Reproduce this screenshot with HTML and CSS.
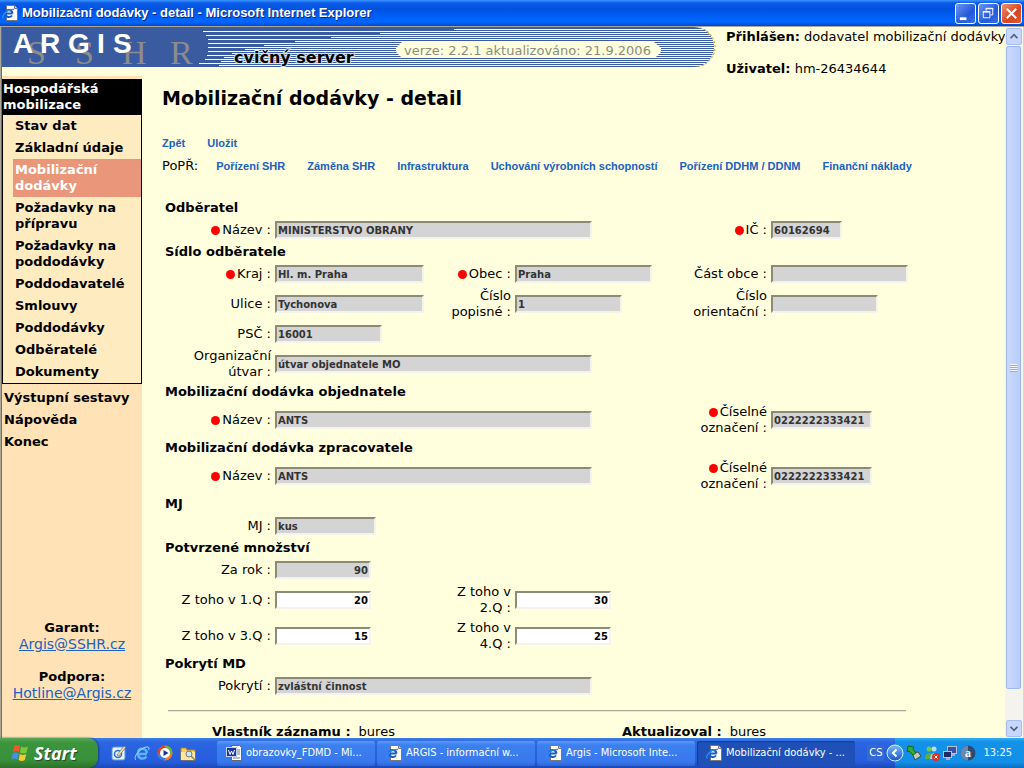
FILE: index.html
```html
<!DOCTYPE html>
<html lang="cs">
<head>
<meta charset="utf-8">
<title>Mobilizační dodávky - detail</title>
<link rel="stylesheet" href="styles.css">
</head>
<body>
<svg class="defs" aria-hidden="true">
  <defs>
    <linearGradient id="ball" x1="0" y1="0" x2="0" y2="1"><stop offset="0" stop-color="#7db8ff"/><stop offset="1" stop-color="#1557c8"/></linearGradient>
    <symbol id="ie-page" viewBox="0 0 16 16">
      <path d="M4.500.5h8l3 3v12h-11z" fill="#fffdf2" stroke="#777"/>
      <path d="M12.500.5v3h3" fill="#d8d4c0" stroke="#777"/>
      <path d="M10.500 8.500H3.500c0 4 4.500 4.500 6.500 2M3.500 8c.5-4 6.500-4 7 .5" fill="none" stroke="#1c5cc8" stroke-width="2"/>
      <path d="M1.500 13.500C-1.500 11.500 5 4 12 4.500" fill="none" stroke="#2f8cf0" stroke-width="1.300"/>
    </symbol>
    <symbol id="ie" viewBox="0 0 16 16">
      <path d="M13 9H4c0 5 6 6 8.500 2.500M4 7.500C4.500 2.500 12 2.500 13 8" fill="none" stroke="#5cb4ff" stroke-width="2.500"/>
      <path d="M2 15C-2 12 8 1 14 2c1.500.5 1 2 .5 3" fill="none" stroke="#a8dcff"/>
    </symbol>
  </defs>
</svg>

<header class="titlebar">
  <svg class="icon16" aria-hidden="true"><use href="#ie-page"/></svg>
  <span class="titlebar-text">Mobilizační dodávky - detail - Microsoft Internet Explorer</span>
  <button class="winbtn" aria-label="Minimalizovat"><svg viewBox="0 0 20 20"><path d="M4 14h7v3H4z" fill="#fff"/></svg></button>
  <button class="winbtn" aria-label="Obnovit"><svg viewBox="0 0 20 20"><path d="M7.500 7V4.500h7v7H12M7 5h8M4.500 8.500h7v6h-7zM4 8h8" fill="none" stroke="#fff"/></svg></button>
  <button class="winbtn close" aria-label="Zavřít"><svg viewBox="0 0 20 20"><path d="M5 5l10 10M15 5L5 15" stroke="#fff" stroke-width="2.200"/></svg></button>
</header>

<div class="viewport">
  <div class="page">
    <div class="top">
      <svg class="banner" viewBox="0 0 712 40" aria-label="ARGIS SSHR">
        <defs>
          <clipPath id="bullet"><path d="M0 0h692a20 20 0 0 1 0 40H0z"/></clipPath>
        </defs>
        <path d="M0 0h692a20 20 0 0 1 0 40H0z" fill="#3a5ba0"/>
        <path clip-path="url(#bullet)" fill="none" stroke="#ffffde" d="M201 4.500h520M204 8.500h520M206 12.500h520M206 16.500h520M206 20.500h520M206 24.500h520M205 28.500h520M203 32.500h520M197 36.500h520M452 2.500h260M378 6.500h340M329 10.500h390M293 14.500h420M262 18.500h450M243 22.500h470M230 26.500h490M222 30.500h490M219 34.500h490M217 38.500h490"/>
        <path d="M694 .5a19 19.500 0 0 1 0 39" fill="none" stroke="#b89a28" stroke-dasharray="2 2"/>
        <path d="M400 15h252l7 6v4l-6 6H400l-6-6v-4z" fill="#ffffde"/>
        <g class="sshr"><text x="25" y="37">S</text><text x="73" y="37">S</text><text x="120" y="37">H</text><text x="168" y="37">R</text></g>
        <g class="argis"><text x="11" y="26">A</text><text x="38" y="26">R</text><text x="66" y="26">G</text><text x="95" y="26">I</text><text x="111" y="26">S</text></g>
        <text class="server" x="232" y="36">cvičný server</text>
        <text class="version" x="402" y="28">verze: 2.2.1 aktualizováno: 21.9.2006</text>
      </svg>
      <div class="login">
        <p><b>Přihlášen:</b> dodavatel mobilizační dodávky</p>
        <p><b>Uživatel:</b> hm-26434644</p>
      </div>
    </div>

    <div class="columns">
      <aside class="sidebar">
        <nav>
          <div class="menu">
            <a class="menu-head" href="#">Hospodářská mobilizace</a>
            <a href="#">Stav dat</a>
            <a href="#">Základní údaje</a>
            <a class="active" href="#">Mobilizační dodávky</a>
            <a href="#">Požadavky na přípravu</a>
            <a href="#">Požadavky na poddodávky</a>
            <a href="#">Poddodavatelé</a>
            <a href="#">Smlouvy</a>
            <a href="#">Poddodávky</a>
            <a href="#">Odběratelé</a>
            <a href="#">Dokumenty</a>
          </div>
          <div class="menu-rest">
            <a href="#">Výstupní sestavy</a>
            <a href="#">Nápověda</a>
            <a href="#">Konec</a>
          </div>
        </nav>
        <div class="contacts">
          <p>Garant:<br><a href="#">Argis@SSHR.cz</a></p>
          <p>Podpora:<br><a href="#">Hotline@Argis.cz</a></p>
        </div>
      </aside>

      <main>
        <h1>Mobilizační dodávky - detail</h1>
        <div class="actions"><a href="#">Zpět</a><a href="#">Uložit</a></div>
        <div class="actions second">
          <span>PoPŘ:</span><a href="#">Pořízení SHR</a><a href="#">Záměna SHR</a><a href="#">Infrastruktura</a><a href="#">Uchování výrobních schopností</a><a href="#">Pořízení DDHM / DDNM</a><a href="#">Finanční náklady</a>
        </div>

        <form>
          <h2>Odběratel</h2>
          <div class="row">
            <label for="f1"><i class="req"></i>Název :</label><input id="f1" class="wide" readonly value="MINISTERSTVO OBRANY">
            <label class="third" for="f2"><i class="req"></i>IČ :</label><input id="f2" class="w71" readonly value="60162694">
          </div>
          <h2>Sídlo odběratele</h2>
          <div class="row">
            <label for="f3"><i class="req"></i>Kraj :</label><input id="f3" class="w149" readonly value="Hl. m. Praha">
            <label for="f4"><i class="req"></i>Obec :</label><input id="f4" class="w137" readonly value="Praha">
            <label for="f5">Část obce :</label><input id="f5" class="w137" readonly>
          </div>
          <div class="row">
            <label for="f6">Ulice :</label><input id="f6" class="w149" readonly value="Tychonova">
            <label for="f7">Číslo<br>popisné :</label><input id="f7" class="w107" readonly value="1">
            <label for="f8">Číslo<br>orientační :</label><input id="f8" class="w107" readonly>
          </div>
          <div class="row">
            <label for="f9">PSČ :</label><input id="f9" class="w107" readonly value="16001">
          </div>
          <div class="row">
            <label for="f10">Organizační<br>útvar :</label><input id="f10" class="wide" readonly value="útvar objednatele MO">
          </div>
          <h2>Mobilizační dodávka objednatele</h2>
          <div class="row">
            <label for="f11"><i class="req"></i>Název :</label><input id="f11" class="wide" readonly value="ANTS">
            <label class="third" for="f12"><i class="req"></i>Číselné<br>označení :</label><input id="f12" class="w101" readonly value="0222222333421">
          </div>
          <h2>Mobilizační dodávka zpracovatele</h2>
          <div class="row">
            <label for="f13"><i class="req"></i>Název :</label><input id="f13" class="wide" readonly value="ANTS">
            <label class="third" for="f14"><i class="req"></i>Číselné<br>označení :</label><input id="f14" class="w101" readonly value="0222222333421">
          </div>
          <h2>MJ</h2>
          <div class="row">
            <label for="f15">MJ :</label><input id="f15" class="w101" readonly value="kus">
          </div>
          <h2>Potvrzené množství</h2>
          <div class="row">
            <label for="f16">Za rok :</label><input id="f16" class="num" readonly value="90">
          </div>
          <div class="row">
            <label for="f17">Z toho v 1.Q :</label><input id="f17" class="num" value="20">
            <label for="f18">Z toho v<br>2.Q :</label><input id="f18" class="num" value="30">
          </div>
          <div class="row">
            <label for="f19">Z toho v 3.Q :</label><input id="f19" class="num" value="15">
            <label for="f20">Z toho v<br>4.Q :</label><input id="f20" class="num" value="25">
          </div>
          <h2>Pokrytí MD</h2>
          <div class="row">
            <label for="f21">Pokrytí :</label><input id="f21" class="wide" readonly value="zvláštní činnost">
          </div>
        </form>
        <hr>
        <div class="record">
          <p><b>Vlastník záznamu :</b><span>bures</span></p>
          <p><b>Aktualizoval :</b><span>bures</span></p>
        </div>
      </main>
    </div>
  </div>

  <div class="scrollbar" aria-hidden="true">
    <svg class="arrow" viewBox="0 0 16 16"><path d="M4 10l4-4 4 4" fill="none" stroke="#4d6185" stroke-width="2"/></svg>
    <div class="thumb"><span class="grip"></span></div>
    <svg class="arrow" viewBox="0 0 16 16"><path d="M4 6l4 4 4-4" fill="none" stroke="#4d6185" stroke-width="2"/></svg>
  </div>
</div>

<footer class="taskbar">
  <button class="start">
    <svg viewBox="0 0 20 18" aria-hidden="true"><path d="M4 2q3-2 6 0L9 8q-3-2-6 0z" fill="#f05a28"/><path d="M11 2.500q3 2 7 0l-1.500 6q-3 2-6.500 0z" fill="#7cc83a"/><path d="M2.700 9.500q3-2 6 0l-1.200 6q-3-2-6 0z" fill="#4a8cf0"/><path d="M9.800 10q3 2 6.500 0l-1.500 6q-3 2-6.200 0z" fill="#fac832"/></svg>
    Start
  </button>
  <div class="quick">
    <svg class="icon16" viewBox="0 0 16 16" aria-label="Plocha"><rect x="1" y="2" width="13" height="13" rx="2" fill="#e8f2fc" stroke="#5a94d0"/><circle cx="7" cy="9" r="3.500" fill="none" stroke="#2874d0" stroke-width="1.500"/><path d="M6 10l7-9 2 1-7 9z" fill="#f4e0b0" stroke="#555" stroke-width=".6"/></svg>
    <svg class="icon16" aria-label="Internet Explorer"><use href="#ie"/></svg>
    <svg class="icon16" viewBox="0 0 16 16" aria-label="Media Player"><circle cx="8" cy="8" r="7.500" fill="#f08020"/><path d="M8 .5A7.500 7.500 0 0 0 .5 8H8z" fill="#e83c20"/><path d="M8 .5A7.500 7.500 0 0 1 15.500 8H8z" fill="#60b840"/><path d="M.5 8A7.500 7.500 0 0 0 8 15.500V8z" fill="#3c7ce0"/><circle cx="8" cy="8" r="5" fill="#fff"/><path d="M6.500 5l5 3-5 3z" fill="#123a90"/></svg>
    <svg class="icon16" viewBox="0 0 16 16" aria-label="Průzkumník"><path d="M1 3h5l1 2h8v10H1z" fill="#f8d060" stroke="#b88018"/><path d="M1 7h14v8H1z" fill="#ffe89c"/><circle cx="9" cy="9" r="3" fill="#c8e8ff" stroke="#777"/><path d="M11 11l4 4" stroke="#885" stroke-width="1.500"/></svg>
  </div>
  <div class="tasks">
    <button><svg class="icon16" viewBox="0 0 16 16" aria-hidden="true"><path d="M5.500.5h8l2 2v13h-10z" fill="#fff" stroke="#666"/><path d="M11 5h3M11 7h3M11 9h3M7 13h7" stroke="#778"/><rect x=".5" y="2.500" width="10" height="9" fill="#1c34a0" stroke="#c8d0f0"/><path d="M2.500 5l1.500 4.500L5.500 6 7 9.500 8.500 5" fill="none" stroke="#fff"/></svg><span>obrazovky_FDMD - Mi...</span></button>
    <button><svg class="icon16" aria-hidden="true"><use href="#ie-page"/></svg><span>ARGIS - informační w...</span></button>
    <button><svg class="icon16" aria-hidden="true"><use href="#ie-page"/></svg><span>Argis - Microsoft Inte...</span></button>
    <button class="current"><svg class="icon16" aria-hidden="true"><use href="#ie-page"/></svg><span>Mobilizační dodávky - ...</span></button>
  </div>
  <span class="lang">CS</span>
  <div class="tray">
    <button class="expand" aria-label="Zobrazit skryté ikony"><svg viewBox="0 0 18 18"><circle cx="9" cy="9" r="8" fill="url(#ball)" stroke="#d8ecff"/><path d="M10.500 5.500L7 9l3.500 3.500" fill="none" stroke="#fff" stroke-width="2"/></svg></button>
    <svg class="icon16" viewBox="0 0 16 16" aria-hidden="true"><path d="M6 8l6-1 3 4-6 4z" fill="#c8c8b8" stroke="#444"/><path d="M2 1l6 1-1 2 3 4-3 2-4-4-2 1z" fill="#38a838" stroke="#186818"/></svg>
    <svg class="icon16" viewBox="0 0 16 16" aria-hidden="true"><circle cx="5" cy="4" r="2.500" fill="#70c850"/><path d="M1 14c0-8 8-8 8 0z" fill="#58b040"/><circle cx="10" cy="4" r="2.500" fill="#b8dcf4"/><path d="M6 14c0-8 8-8 8 0z" fill="#a8ccf0"/><circle cx="12" cy="12" r="4" fill="#e03020"/><path d="M10.500 10.500l3 3m0-3l-3 3" stroke="#fff"/></svg>
    <svg class="icon16" viewBox="0 0 16 16" aria-hidden="true"><rect x="5.500" y="1.500" width="9" height="7" fill="#3a50a0" stroke="#b8c0d8"/><path d="M9 9h4v2H9z" fill="#a8b0c8"/><rect x="1.500" y="6.500" width="8" height="6" fill="#202c60" stroke="#b8c0d8"/><path d="M4 13h4v2H4z" fill="#a8b0c8"/></svg>
    <svg class="icon16" viewBox="0 0 16 16" aria-hidden="true"><circle cx="8" cy="8" r="7.500" fill="#2c4a78"/><path d="M8 .5a7.500 7.500 0 0 0 0 15z" fill="#6888b0"/><text class="tray-a" x="5" y="12">a</text></svg>
    <time>13:25</time>
  </div>
</footer>
</body>
</html>
```

FILE: styles.css
```css
* { box-sizing: border-box; }
body {
  margin: 0;
  height: 100vh;
  display: flex;
  flex-direction: column;
  overflow: hidden;
  background: #ffffde;
  color: #000;
  font: 13px/16px "DejaVu Sans", Verdana, sans-serif;
}
p { margin: 0; }
button { font: inherit; border: 0; padding: 0; margin: 0; color: inherit; }
.defs { position: absolute; width: 0; height: 0; }
.icon16 { width: 16px; height: 16px; flex: none; }

.titlebar {
  flex: none;
  height: 26px;
  display: flex;
  align-items: center;
  gap: 2px;
  padding: 0 2px;
  background: linear-gradient(#3c94ff 0, #0a5ce8 3px, #0052e0 9px, #0060f8 17px, #0068ff 22px, #0046d0 26px);
  color: #fff;
}
.titlebar-text {
  flex: 1;
  padding-left: 2px;
  white-space: nowrap;
  overflow: hidden;
  font: bold 13px/18px "Liberation Sans", Arial, sans-serif;
  text-shadow: 1px 1px 0 #0a2a80;
}
.winbtn {
  width: 21px;
  height: 21px;
  border: 1px solid #fff;
  border-radius: 3px;
  background: linear-gradient(135deg, #6c96f4, #2458d8 60%, #3a70ec);
}
.winbtn.close { background: linear-gradient(135deg, #f09070, #d84420 60%, #e05c38); }
.winbtn svg { display: block; width: 19px; height: 19px; }

.viewport {
  flex: 1;
  min-height: 0;
  display: flex;
  border: solid #aca899;
  border-width: 1px 0 0 1px;
  box-shadow: inset 1px 0 #716f64;
}
.page { flex: 1; min-width: 0; display: flex; flex-direction: column; overflow: hidden; padding-left: 1px; }
.top { display: flex; gap: 12px; height: 49px; flex: none; }
.banner { width: 712px; height: 40px; flex: none; overflow: visible; }
.sshr { font: 34px "Liberation Serif", "Times New Roman", serif; fill: #8c8c8c; }
.argis { font: bold 28px "Liberation Sans", Arial, sans-serif; fill: #fff; }
.server { font: bold 16px "DejaVu Sans", Verdana, sans-serif; paint-order: stroke; stroke: #d8e0e8; stroke-width: 2px; }
.version { font: 13px "DejaVu Sans", Verdana, sans-serif; fill: #8c8c80; }
.login { padding-top: 2px; white-space: nowrap; }
.login p + p { margin-top: 16px; }

.columns { flex: 1; display: flex; min-height: 0; }
.sidebar {
  width: 140px;
  flex: none;
  display: flex;
  flex-direction: column;
  justify-content: space-between;
  padding-top: 3px;
  background: #ffe2b5;
  font-weight: bold;
}
.menu { border: solid #000; border-width: 0 1px 1px; background: #ffebc0; }
.sidebar nav a { display: block; padding: 3px 2px; margin-left: 10px; color: #000; text-decoration: none; }
.sidebar nav .menu-head { margin: 0; padding: 2px 0; background: #000; color: #fff; }
.sidebar nav .active { background: #e9967a; color: #fff; }
.menu-rest { padding-top: 3px; }
.sidebar .menu-rest a { margin-left: 0; }
.contacts { text-align: center; padding-bottom: 36px; }
.contacts p + p { margin-top: 16px; }
.contacts a { font-weight: normal; font-size: 14px; color: #2060c0; }

main { flex: 1; min-width: 0; padding: 10px 99px 0 20px; }
h1 { margin: 0; font-size: 19px; line-height: 24px; }
.actions { display: flex; gap: 22px; margin-top: 25px; white-space: nowrap; }
.actions.second { margin-top: 7px; }
.actions span { margin-right: -4px; }
.actions a { color: #2060c0; text-decoration: none; font: bold 11px/16px "Liberation Sans", Arial, sans-serif; }
form { margin: 24px 0 0 3px; }
h2 { margin: 0; padding: 2px 0; font-size: 13px; line-height: 16px; }
.row {
  display: grid;
  grid-template-columns: 106px 166px 66px 168px 80px 1fr;
  column-gap: 4px;
  align-items: center;
  min-height: 24px;
  padding: 2px 0;
}
.row label { text-align: right; white-space: nowrap; }
.row .third { grid-column: 5; }
.req { display: inline-block; width: 9px; height: 9px; margin-right: 2px; border-radius: 5px; background: #f00; vertical-align: -1px; }
input {
  height: 18px;
  margin: 0;
  padding: 0 1px;
  border: 2px solid;
  border-color: #8c8a78 #f4f4ec #f4f4ec #8c8a78;
  border-radius: 0;
  background: #fff;
  color: #000;
  font: bold 10px/14px "DejaVu Sans", Verdana, sans-serif;
}
input:read-only { background: #d4d4d4; color: #333; }
.wide { grid-column: 2 / span 3; width: 317px; }
.w149 { width: 149px; }
.w137 { width: 137px; }
.w107 { width: 107px; }
.w101 { width: 101px; }
.w71 { width: 71px; }
.num { width: 96px; text-align: right; }
hr { margin: 12px 0 0 6px; border: 0; border-top: 1px solid #aca899; border-bottom: 1px solid #e8e8d8; }
.record { display: grid; grid-template-columns: 410px 1fr; padding: 12px 0 0 50px; white-space: nowrap; }
.record span { margin-left: 8px; }

.scrollbar { width: 19px; flex: none; display: flex; flex-direction: column; padding: 1px 2px 1px 1px; background: #f4f3ee; border-right: 1px solid #d8d8d0; }
.arrow { width: 16px; height: 17px; flex: none; border: 1px solid #a8bef0; border-radius: 2px; background: #c6d6fc; }
.thumb { flex: 1; margin: 1px 0 31px; display: flex; align-items: center; justify-content: center; border: 1px solid #a0b8f0; border-radius: 2px; background: linear-gradient(90deg, #cadafd, #b8ccf8); }
.grip { width: 7px; height: 8px; background: repeating-linear-gradient(#eef4fe 0 1px, #8cb0f8 1px 2px); }

.taskbar {
  flex: none;
  height: 30px;
  display: flex;
  align-items: center;
  background: linear-gradient(#3c80e8 0, #2c66e0 4px, #245cdc 24px, #1c48b0 30px);
  color: #fff;
  font: 11px/16px "DejaVu Sans Condensed", Tahoma, sans-serif;
}
.start {
  width: 98px;
  align-self: stretch;
  display: flex;
  align-items: center;
  gap: 4px;
  padding-left: 10px;
  border-radius: 0 10px 10px 0;
  background: linear-gradient(#58a858 0, #3c943c 5px, #389038 22px, #2c702c 30px);
  box-shadow: 1px 0 2px #183c80;
  font: italic bold 18px/22px "Open Sans", sans-serif;
  text-shadow: 1px 1px 1px #204820;
}
.start svg { width: 20px; height: 18px; }
.quick { display: flex; gap: 7px; padding: 0 21px 0 13px; }
.tasks { flex: 1; min-width: 0; display: flex; gap: 2px; }
.tasks button {
  flex: 1;
  min-width: 0;
  max-width: 158px;
  height: 25px;
  display: flex;
  align-items: center;
  gap: 4px;
  padding: 0 9px;
  border-radius: 2px;
  background: linear-gradient(#5c98f8 0, #3c80f0 4px, #3878ec 21px, #2c64d8 25px);
  white-space: nowrap;
}
.tasks span { overflow: hidden; }
.tasks .current { background: #1e50b8; box-shadow: inset 1px 1px 1px #143c90; }
.lang { padding: 0 2px; background: #3468d4; }
.tray {
  align-self: stretch;
  display: flex;
  align-items: center;
  gap: 2px;
  margin-left: 11px;
  padding-right: 12px;
  background: linear-gradient(#30b0f4 0, #1490e8 4px, #1290e8 24px, #0c6cc0 30px);
}
.expand { width: 18px; height: 18px; margin-left: -9px; background: none; }
.expand svg { display: block; }
.tray-a { font: bold 12px "Liberation Serif", serif; fill: #fff; }
.tray time { margin-left: 5px; }
```
